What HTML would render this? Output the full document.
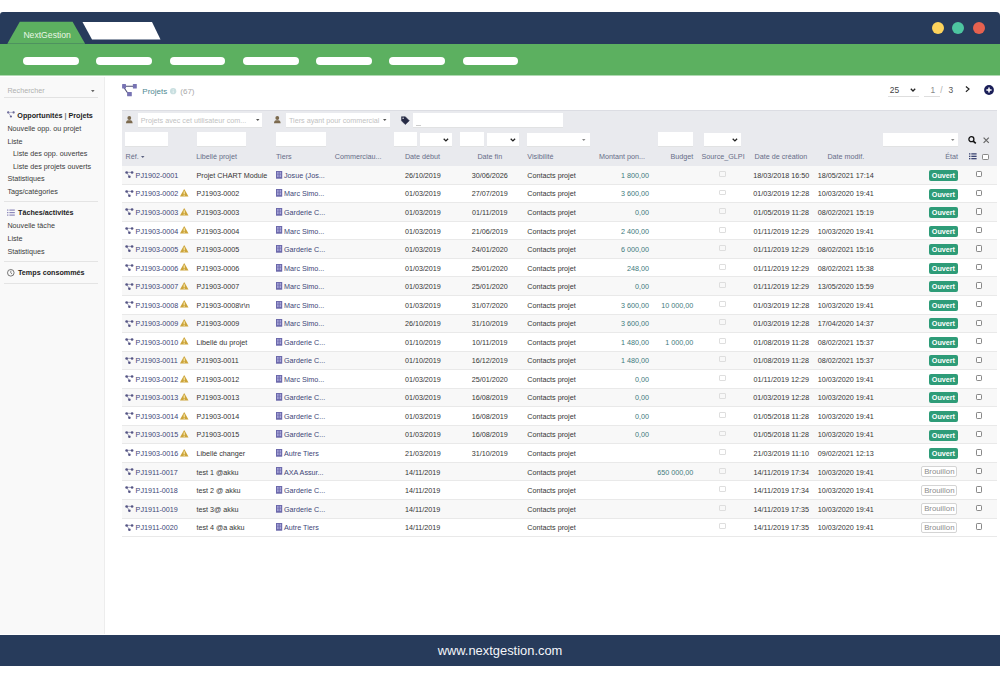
<!DOCTYPE html><html><head><meta charset="utf-8"><style>
html,body{margin:0;padding:0;width:1000px;height:679px;overflow:hidden;background:#fff;}
body{position:relative;font-family:"Liberation Sans",sans-serif;}
.t{position:absolute;white-space:nowrap;}
.r{position:absolute;}
svg{position:absolute;overflow:visible;}
</style></head><body>
<div class="r" style="left:0.00px;top:12.00px;width:1000.00px;height:31.70px;background:#273b5b;border-radius:3px 4px 0 0;"></div>
<svg style="left:0;top:0" width="1000" height="80"><polygon points="7.3,43.8 19.8,21.8 72.6,21.8 85.1,43.8" fill="#5cb060"/><polygon points="82.5,22 152,22 160.5,39.5 92,39.5" fill="#fff"/></svg>
<div class="t" style="left:23.40px;top:31.05px;font-size:8.65px;line-height:8.65px;color:#e9f7e4;">NextGestion</div>
<div class="r" style="left:0.00px;top:43.70px;width:1000.00px;height:31.30px;background:#5cb060;"></div>
<div class="r" style="left:0.00px;top:75.00px;width:1000.00px;height:1.00px;background:#b0d9b2;"></div>
<div class="r" style="left:23.00px;top:56.90px;width:55.70px;height:7.70px;background:#fff;border-radius:4px;"></div>
<div class="r" style="left:96.28px;top:56.90px;width:55.70px;height:7.70px;background:#fff;border-radius:4px;"></div>
<div class="r" style="left:169.56px;top:56.90px;width:55.70px;height:7.70px;background:#fff;border-radius:4px;"></div>
<div class="r" style="left:242.84px;top:56.90px;width:55.70px;height:7.70px;background:#fff;border-radius:4px;"></div>
<div class="r" style="left:316.12px;top:56.90px;width:55.70px;height:7.70px;background:#fff;border-radius:4px;"></div>
<div class="r" style="left:389.40px;top:56.90px;width:55.70px;height:7.70px;background:#fff;border-radius:4px;"></div>
<div class="r" style="left:462.68px;top:56.90px;width:55.70px;height:7.70px;background:#fff;border-radius:4px;"></div>
<div class="r" style="left:932.00px;top:21.60px;width:12.00px;height:12.00px;background:#fdd35c;border-radius:50%;"></div>
<div class="r" style="left:952.20px;top:21.60px;width:12.00px;height:12.00px;background:#4dc5a0;border-radius:50%;"></div>
<div class="r" style="left:973.00px;top:21.60px;width:12.00px;height:12.00px;background:#e6614f;border-radius:50%;"></div>
<div class="r" style="left:0.00px;top:76.60px;width:103.80px;height:557.60px;background:#f9f9f9;border-right:1px solid #ededed;"></div>
<div class="t" style="left:7.40px;top:86.98px;font-size:7.2px;line-height:7.2px;color:#b0b0b0;">Rechercher</div>
<svg style="left:90.5px;top:90px" width="4" height="3"><polygon points="0,0 3.6,0 1.8,2.2" fill="#666"/></svg>
<div class="r" style="left:4.30px;top:97.20px;width:93.70px;height:1.00px;background:#e2e2e2;"></div>
<div class="t" style="left:17.30px;top:111.58px;font-size:7.2px;line-height:7.2px;color:#222;font-weight:bold;">Opportunités <span style="color:#777">|</span> Projets</div>
<div class="t" style="left:7.40px;top:125.18px;font-size:7.2px;line-height:7.2px;color:#3a3a3a;">Nouvelle opp. ou projet</div>
<div class="t" style="left:7.40px;top:137.88px;font-size:7.2px;line-height:7.2px;color:#3a3a3a;">Liste</div>
<div class="t" style="left:13.10px;top:150.48px;font-size:7.2px;line-height:7.2px;color:#3a3a3a;">Liste des opp. ouvertes</div>
<div class="t" style="left:13.10px;top:162.68px;font-size:7.2px;line-height:7.2px;color:#3a3a3a;">Liste des projets ouverts</div>
<div class="t" style="left:7.40px;top:175.18px;font-size:7.2px;line-height:7.2px;color:#3a3a3a;">Statistiques</div>
<div class="t" style="left:7.40px;top:187.78px;font-size:7.2px;line-height:7.2px;color:#3a3a3a;">Tags/catégories</div>
<div class="t" style="left:18.00px;top:208.78px;font-size:7.2px;line-height:7.2px;color:#222;font-weight:bold;">Tâches/activités</div>
<div class="t" style="left:7.40px;top:222.48px;font-size:7.2px;line-height:7.2px;color:#3a3a3a;">Nouvelle tâche</div>
<div class="t" style="left:7.40px;top:234.98px;font-size:7.2px;line-height:7.2px;color:#3a3a3a;">Liste</div>
<div class="t" style="left:7.40px;top:247.78px;font-size:7.2px;line-height:7.2px;color:#3a3a3a;">Statistiques</div>
<div class="t" style="left:18.00px;top:268.58px;font-size:7.2px;line-height:7.2px;color:#222;font-weight:bold;">Temps consommés</div>
<div class="r" style="left:4.20px;top:200.80px;width:94.00px;height:1.00px;background:#e4e4e4;"></div>
<div class="r" style="left:4.20px;top:261.10px;width:94.00px;height:1.00px;background:#e4e4e4;"></div>
<div class="r" style="left:4.20px;top:282.90px;width:94.00px;height:1.00px;background:#e4e4e4;"></div>
<svg style="left:7.4px;top:110.9px" width="8" height="7"><g fill="#5e5c8e"><circle cx="1.2" cy="1.4" r="1.1"/><circle cx="6.6" cy="1.4" r="1.1"/><circle cx="3.9" cy="5.5" r="1.1"/></g><path d="M1.2 1.4 L6.6 1.4 M1.2 1.4 L3.9 5.5" stroke="#8a88b0" stroke-width="0.6"/></svg>
<svg style="left:7px;top:208.5px" width="8" height="7"><g fill="#8d89bb"><rect x="0" y="0.5" width="1.4" height="1.2"/><rect x="0" y="3" width="1.4" height="1.2"/><rect x="0" y="5.5" width="1.4" height="1.2"/><rect x="2.4" y="0.5" width="5.4" height="1.2"/><rect x="2.4" y="3" width="5.4" height="1.2"/><rect x="2.4" y="5.5" width="5.4" height="1.2"/></g></svg>
<svg style="left:7px;top:268.5px" width="8" height="8"><circle cx="3.8" cy="3.8" r="3.3" fill="none" stroke="#555" stroke-width="0.8"/><path d="M3.8 1.8 V3.9 L5.2 5.2" fill="none" stroke="#555" stroke-width="0.7"/></svg>
<svg style="left:118px;top:80px" width="24" height="20"><path d="M5 6.3 H15 M5 6.3 L9.7 13" stroke="#4f4f72" stroke-width="1.1"/><g fill="#7773b3"><rect x="4.1" y="4.1" width="3.9" height="4.4" rx="0.5"/><rect x="14.9" y="4.1" width="3.9" height="4.4" rx="0.5"/><rect x="9.1" y="11.9" width="4.7" height="4.4" rx="0.5"/></g></svg>
<div class="t" style="left:142.30px;top:87.50px;font-size:8.0px;line-height:8.0px;color:#4f8a92;">Projets</div>
<svg style="left:170.2px;top:87.6px" width="7" height="7"><circle cx="3.15" cy="3.15" r="3.15" fill="#c9dfe0"/><rect x="2.75" y="2.6" width="0.8" height="2.5" fill="#f2f8f8"/><rect x="2.75" y="1.3" width="0.8" height="0.8" fill="#f2f8f8"/></svg>
<div class="t" style="left:180.30px;top:87.50px;font-size:8.0px;line-height:8.0px;color:#a9a9a9;">(67)</div>
<div class="t" style="left:889.80px;top:85.86px;font-size:8.4px;line-height:8.4px;color:#444;">25</div>
<svg style="left:909.5px;top:87.5px" width="7" height="4"><path d="M0.8 0.8 L3 3 L5.2 0.8" fill="none" stroke="#222" stroke-width="1.3"/></svg>
<div class="r" style="left:888.20px;top:95.80px;width:30.40px;height:0.80px;background:#dedede;"></div>
<div class="t" style="left:930.60px;top:85.86px;font-size:8.4px;line-height:8.4px;color:#888;">1</div>
<div class="r" style="left:923.80px;top:95.80px;width:16.50px;height:0.80px;background:#dedede;"></div>
<div class="t" style="left:940.30px;top:85.86px;font-size:8.4px;line-height:8.4px;color:#aaa;">/</div>
<div class="t" style="left:948.40px;top:85.86px;font-size:8.4px;line-height:8.4px;color:#555;">3</div>
<svg style="left:965px;top:86px" width="6" height="7"><path d="M0.9 0.5 L4 3.1 L0.9 5.7" fill="none" stroke="#222" stroke-width="1.2"/></svg>
<svg style="left:983.6px;top:84.8px" width="11" height="11"><circle cx="5" cy="5" r="4.9" fill="#1a1e58"/><path d="M5 2.4 V7.6 M2.4 5 H7.6" stroke="#fff" stroke-width="1.5"/></svg>
<div class="r" style="left:121.50px;top:109.80px;width:875.00px;height:55.90px;background:#e9eaee;border-top:0.8px solid #dcdde3;box-sizing:border-box;"></div>
<div class="r" style="left:137.90px;top:113.00px;width:124.50px;height:14.00px;background:#fff;box-shadow:0 0.6px 0 #dcdcdc;"></div>
<div class="t" style="left:140.80px;top:116.98px;font-size:7.2px;line-height:7.2px;color:#c2c2c2;">Projets avec cet utilisateur com...</div>
<div class="r" style="left:285.60px;top:113.00px;width:104.00px;height:14.00px;background:#fff;box-shadow:0 0.6px 0 #dcdcdc;"></div>
<div class="t" style="left:289.00px;top:116.98px;font-size:7.2px;line-height:7.2px;color:#c2c2c2;">Tiers ayant pour commercial</div>
<div class="r" style="left:413.00px;top:113.00px;width:150.00px;height:14.40px;background:#fff;box-shadow:0 0.6px 0 #dcdcdc;"></div>
<div class="r" style="left:416.00px;top:124.60px;width:5.00px;height:0.70px;background:#ccc;"></div>
<svg style="left:255.7px;top:119.3px" width="4" height="3"><polygon points="0,0 3.5,0 1.75,2" fill="#555"/></svg>
<svg style="left:383px;top:119.3px" width="4" height="3"><polygon points="0,0 3.5,0 1.75,2" fill="#555"/></svg>
<svg style="left:125.9px;top:115.8px" width="7" height="8"><g fill="#7c6a4e"><circle cx="3.3" cy="2" r="1.9"/><path d="M0 7.2 C0 4.6 1.2 4.2 3.3 4.2 C5.4 4.2 6.6 4.6 6.6 7.2 Z"/></g></svg>
<svg style="left:273.6px;top:115.8px" width="7" height="8"><g fill="#7c6a4e"><circle cx="3.3" cy="2" r="1.9"/><path d="M0 7.2 C0 4.6 1.2 4.2 3.3 4.2 C5.4 4.2 6.6 4.6 6.6 7.2 Z"/></g></svg>
<svg style="left:400.6px;top:115.6px" width="9" height="9"><path d="M0.5 0.7 H4.3 L8.3 4.7 L4.3 8.6 L0.5 4.8 Z" fill="#262a44" stroke="#262a44" stroke-width="0.5" stroke-linejoin="round"/><circle cx="2.1" cy="2.3" r="0.75" fill="#e9eaee"/></svg>
<div class="r" style="left:124.70px;top:132.30px;width:43.30px;height:13.90px;background:#fff;box-shadow:0 0.6px 0 #dcdcdc;"></div>
<div class="r" style="left:196.80px;top:132.30px;width:49.60px;height:13.90px;background:#fff;box-shadow:0 0.6px 0 #dcdcdc;"></div>
<div class="r" style="left:276.20px;top:132.30px;width:50.10px;height:13.90px;background:#fff;box-shadow:0 0.6px 0 #dcdcdc;"></div>
<div class="r" style="left:393.60px;top:132.30px;width:23.80px;height:13.90px;background:#fff;box-shadow:0 0.6px 0 #dcdcdc;"></div>
<div class="r" style="left:460.30px;top:132.30px;width:24.20px;height:13.90px;background:#fff;box-shadow:0 0.6px 0 #dcdcdc;"></div>
<div class="r" style="left:658.00px;top:132.30px;width:34.80px;height:13.90px;background:#fff;box-shadow:0 0.6px 0 #dcdcdc;"></div>
<div class="r" style="left:419.60px;top:132.80px;width:32.40px;height:13.10px;background:#fff;box-shadow:0 0.6px 0 #dcdcdc;"></div>
<svg style="left:442.7px;top:138px" width="7" height="4"><path d="M0.7 0.7 L2.9 2.9 L5.1 0.7" fill="none" stroke="#222" stroke-width="1.3"/></svg>
<div class="r" style="left:487.10px;top:132.80px;width:31.50px;height:13.10px;background:#fff;box-shadow:0 0.6px 0 #dcdcdc;"></div>
<svg style="left:509.8px;top:138px" width="7" height="4"><path d="M0.7 0.7 L2.9 2.9 L5.1 0.7" fill="none" stroke="#222" stroke-width="1.3"/></svg>
<div class="r" style="left:704.20px;top:132.80px;width:37.00px;height:13.10px;background:#fff;box-shadow:0 0.6px 0 #dcdcdc;"></div>
<svg style="left:732.4px;top:138px" width="7" height="4"><path d="M0.7 0.7 L2.9 2.9 L5.1 0.7" fill="none" stroke="#222" stroke-width="1.3"/></svg>
<div class="r" style="left:527.00px;top:132.60px;width:62.50px;height:13.60px;background:#fff;box-shadow:0 0.6px 0 #dcdcdc;"></div>
<svg style="left:582.3px;top:139px" width="4" height="3"><polygon points="0,0 3.5,0 1.75,2" fill="#888"/></svg>
<div class="r" style="left:882.60px;top:132.60px;width:75.20px;height:13.60px;background:#fff;box-shadow:0 0.6px 0 #dcdcdc;"></div>
<svg style="left:951px;top:139px" width="4" height="3"><polygon points="0,0 3.5,0 1.75,2" fill="#888"/></svg>
<svg style="left:968px;top:136.4px" width="10" height="8"><circle cx="3.4" cy="3.2" r="2.5" fill="none" stroke="#111" stroke-width="1.3"/><path d="M5.2 5.1 L7.8 7.4" stroke="#111" stroke-width="1.6"/></svg>
<svg style="left:983px;top:137px" width="7" height="7"><path d="M0.6 0.6 L5.8 5.8 M5.8 0.6 L0.6 5.8" stroke="#666" stroke-width="1.2"/></svg>
<div class="t" style="left:125.60px;top:152.68px;font-size:7.2px;line-height:7.2px;color:#676d88;">Réf.</div>
<div class="t" style="left:196.20px;top:152.68px;font-size:7.2px;line-height:7.2px;color:#676d88;">Libellé projet</div>
<div class="t" style="left:276.00px;top:152.68px;font-size:7.2px;line-height:7.2px;color:#676d88;">Tiers</div>
<div class="t" style="left:334.80px;top:152.68px;font-size:7.2px;line-height:7.2px;color:#676d88;">Commerciau...</div>
<div class="t" style="left:404.90px;top:152.68px;font-size:7.2px;line-height:7.2px;color:#676d88;">Date début</div>
<div class="t" style="left:289.80px;width:400px;text-align:center;top:152.68px;font-size:7.2px;line-height:7.2px;color:#676d88;">Date fin</div>
<div class="t" style="left:527.30px;top:152.68px;font-size:7.2px;line-height:7.2px;color:#676d88;">Visibilité</div>
<div class="t" style="right:355.00px;top:152.68px;font-size:7.2px;line-height:7.2px;color:#676d88;">Montant pon...</div>
<div class="t" style="right:306.80px;top:152.68px;font-size:7.2px;line-height:7.2px;color:#676d88;">Budget</div>
<div class="t" style="left:701.50px;top:152.68px;font-size:7.2px;line-height:7.2px;color:#676d88;">Source_GLPI</div>
<div class="t" style="left:580.90px;width:400px;text-align:center;top:152.68px;font-size:7.2px;line-height:7.2px;color:#676d88;">Date de création</div>
<div class="t" style="left:645.80px;width:400px;text-align:center;top:152.68px;font-size:7.2px;line-height:7.2px;color:#676d88;">Date modif.</div>
<div class="t" style="right:41.90px;top:152.68px;font-size:7.2px;line-height:7.2px;color:#676d88;">État</div>
<svg style="left:141px;top:155.5px" width="4" height="3"><polygon points="0,0 3.5,0 1.75,2" fill="#5a6180"/></svg>
<svg style="left:968.6px;top:153px" width="8" height="7"><g fill="#2b3566"><rect x="0" y="0.3" width="1.4" height="1.2"/><rect x="0" y="2.7" width="1.4" height="1.2"/><rect x="0" y="5.1" width="1.4" height="1.2"/><rect x="2.3" y="0.3" width="5.3" height="1.2"/><rect x="2.3" y="2.7" width="5.3" height="1.2"/><rect x="2.3" y="5.1" width="5.3" height="1.2"/></g></svg>
<div class="r" style="left:982.10px;top:153.60px;width:6.90px;height:6.20px;background:#fff;border:0.8px solid #888;border-radius:1.2px;box-sizing:border-box;"></div>
<div class="r" style="left:121.50px;top:165.70px;width:875.00px;height:18.54px;background:#f8f8f8;"></div>
<div class="r" style="left:121.50px;top:183.79px;width:875.00px;height:1.00px;background:#e9e9e9;z-index:1;"></div>
<svg style="left:125px;top:171.30px" width="9" height="7"><g fill="#555585"><circle cx="1.6" cy="1.5" r="1.3"/><circle cx="7.1" cy="1.5" r="1.3"/><circle cx="4.4" cy="5.8" r="1.3"/></g><path d="M1.6 1.3 L7.1 1.4 M1.6 1.3 L4.4 5.6" stroke="#555585" stroke-width="0.55"/></svg>
<div class="t" style="left:135.60px;top:171.88px;font-size:7.2px;line-height:7.2px;color:#3d4677;">PJ1902-0001</div>
<div class="t" style="left:196.50px;top:171.88px;font-size:7.2px;line-height:7.2px;color:#353535;">Projet CHART Module</div>
<svg style="left:276px;top:170.80px" width="7" height="8"><rect x="0" y="0" width="6.2" height="7.7" fill="#6a67aa"/><g fill="#a8a6da"><rect x="1.1" y="0.9" width="1.5" height="5.2"/><rect x="3.6" y="0.9" width="1.5" height="5.2"/></g><rect x="1.1" y="2.9" width="4" height="0.5" fill="#6a67aa"/></svg>
<div class="t" style="left:284.00px;top:171.88px;font-size:7.2px;line-height:7.2px;color:#3d4677;">Josue (Jos...</div>
<div class="t" style="left:404.90px;top:171.88px;font-size:7.2px;line-height:7.2px;color:#353535;">26/10/2019</div>
<div class="t" style="left:289.70px;width:400px;text-align:center;top:171.88px;font-size:7.2px;line-height:7.2px;color:#353535;">30/06/2026</div>
<div class="t" style="left:527.30px;top:171.88px;font-size:7.2px;line-height:7.2px;color:#353535;">Contacts projet</div>
<div class="t" style="right:351.10px;top:171.88px;font-size:7.2px;line-height:7.2px;color:#417a7d;">1 800,00</div>
<div class="r" style="left:719.10px;top:171.00px;width:6.70px;height:5.90px;background:transparent;border:0.8px solid #dedede;border-radius:1px;box-sizing:border-box;"></div>
<div class="t" style="left:581.30px;width:400px;text-align:center;top:171.88px;font-size:7.2px;line-height:7.2px;color:#353535;">18/03/2018 16:50</div>
<div class="t" style="left:645.75px;width:400px;text-align:center;top:171.88px;font-size:7.2px;line-height:7.2px;color:#353535;">18/05/2021 17:14</div>
<div class="r" style="left:929.00px;top:170.00px;width:28.80px;height:11.00px;background:#2e9c78;border-radius:2px;"></div>
<div class="t" style="left:743.40px;width:400px;text-align:center;top:171.98px;font-size:7.2px;line-height:7.2px;color:#fff;font-weight:bold;">Ouvert</div>
<div class="r" style="left:975.50px;top:171.20px;width:6.50px;height:6.30px;background:#fff;border:0.8px solid #888;border-radius:1.2px;box-sizing:border-box;"></div>
<div class="r" style="left:121.50px;top:184.24px;width:875.00px;height:18.54px;background:#fff;"></div>
<div class="r" style="left:121.50px;top:202.33px;width:875.00px;height:1.00px;background:#e9e9e9;z-index:1;"></div>
<svg style="left:125px;top:189.84px" width="9" height="7"><g fill="#555585"><circle cx="1.6" cy="1.5" r="1.3"/><circle cx="7.1" cy="1.5" r="1.3"/><circle cx="4.4" cy="5.8" r="1.3"/></g><path d="M1.6 1.3 L7.1 1.4 M1.6 1.3 L4.4 5.6" stroke="#555585" stroke-width="0.55"/></svg>
<div class="t" style="left:135.60px;top:190.42px;font-size:7.2px;line-height:7.2px;color:#3d4677;">PJ1903-0002</div>
<svg style="left:179.6px;top:189.14px" width="9" height="8"><polygon points="4.2,0.1 8.5,7.5 0,7.5" fill="#cca43a"/><rect x="3.6" y="2.3" width="1.2" height="3" fill="#f8e8ab"/><rect x="3.6" y="5.9" width="1.2" height="0.9" fill="#f8e8ab"/></svg>
<div class="t" style="left:196.50px;top:190.42px;font-size:7.2px;line-height:7.2px;color:#353535;">PJ1903-0002</div>
<svg style="left:276px;top:189.34px" width="7" height="8"><rect x="0" y="0" width="6.2" height="7.7" fill="#6a67aa"/><g fill="#a8a6da"><rect x="1.1" y="0.9" width="1.5" height="5.2"/><rect x="3.6" y="0.9" width="1.5" height="5.2"/></g><rect x="1.1" y="2.9" width="4" height="0.5" fill="#6a67aa"/></svg>
<div class="t" style="left:284.00px;top:190.42px;font-size:7.2px;line-height:7.2px;color:#3d4677;">Marc Simo...</div>
<div class="t" style="left:404.90px;top:190.42px;font-size:7.2px;line-height:7.2px;color:#353535;">01/03/2019</div>
<div class="t" style="left:289.70px;width:400px;text-align:center;top:190.42px;font-size:7.2px;line-height:7.2px;color:#353535;">27/07/2019</div>
<div class="t" style="left:527.30px;top:190.42px;font-size:7.2px;line-height:7.2px;color:#353535;">Contacts projet</div>
<div class="t" style="right:351.10px;top:190.42px;font-size:7.2px;line-height:7.2px;color:#417a7d;">3 600,00</div>
<div class="r" style="left:719.10px;top:189.54px;width:6.70px;height:5.90px;background:transparent;border:0.8px solid #dedede;border-radius:1px;box-sizing:border-box;"></div>
<div class="t" style="left:581.30px;width:400px;text-align:center;top:190.42px;font-size:7.2px;line-height:7.2px;color:#353535;">01/03/2019 12:28</div>
<div class="t" style="left:645.75px;width:400px;text-align:center;top:190.42px;font-size:7.2px;line-height:7.2px;color:#353535;">10/03/2020 19:41</div>
<div class="r" style="left:929.00px;top:188.54px;width:28.80px;height:11.00px;background:#2e9c78;border-radius:2px;"></div>
<div class="t" style="left:743.40px;width:400px;text-align:center;top:190.52px;font-size:7.2px;line-height:7.2px;color:#fff;font-weight:bold;">Ouvert</div>
<div class="r" style="left:975.50px;top:189.74px;width:6.50px;height:6.30px;background:#fff;border:0.8px solid #888;border-radius:1.2px;box-sizing:border-box;"></div>
<div class="r" style="left:121.50px;top:202.78px;width:875.00px;height:18.54px;background:#f8f8f8;"></div>
<div class="r" style="left:121.50px;top:220.87px;width:875.00px;height:1.00px;background:#e9e9e9;z-index:1;"></div>
<svg style="left:125px;top:208.38px" width="9" height="7"><g fill="#555585"><circle cx="1.6" cy="1.5" r="1.3"/><circle cx="7.1" cy="1.5" r="1.3"/><circle cx="4.4" cy="5.8" r="1.3"/></g><path d="M1.6 1.3 L7.1 1.4 M1.6 1.3 L4.4 5.6" stroke="#555585" stroke-width="0.55"/></svg>
<div class="t" style="left:135.60px;top:208.96px;font-size:7.2px;line-height:7.2px;color:#3d4677;">PJ1903-0003</div>
<svg style="left:179.6px;top:207.68px" width="9" height="8"><polygon points="4.2,0.1 8.5,7.5 0,7.5" fill="#cca43a"/><rect x="3.6" y="2.3" width="1.2" height="3" fill="#f8e8ab"/><rect x="3.6" y="5.9" width="1.2" height="0.9" fill="#f8e8ab"/></svg>
<div class="t" style="left:196.50px;top:208.96px;font-size:7.2px;line-height:7.2px;color:#353535;">PJ1903-0003</div>
<svg style="left:276px;top:207.88px" width="7" height="8"><rect x="0" y="0" width="6.2" height="7.7" fill="#6a67aa"/><g fill="#a8a6da"><rect x="1.1" y="0.9" width="1.5" height="5.2"/><rect x="3.6" y="0.9" width="1.5" height="5.2"/></g><rect x="1.1" y="2.9" width="4" height="0.5" fill="#6a67aa"/></svg>
<div class="t" style="left:284.00px;top:208.96px;font-size:7.2px;line-height:7.2px;color:#3d4677;">Garderie C...</div>
<div class="t" style="left:404.90px;top:208.96px;font-size:7.2px;line-height:7.2px;color:#353535;">01/03/2019</div>
<div class="t" style="left:289.70px;width:400px;text-align:center;top:208.96px;font-size:7.2px;line-height:7.2px;color:#353535;">01/11/2019</div>
<div class="t" style="left:527.30px;top:208.96px;font-size:7.2px;line-height:7.2px;color:#353535;">Contacts projet</div>
<div class="t" style="right:351.10px;top:208.96px;font-size:7.2px;line-height:7.2px;color:#417a7d;">0,00</div>
<div class="r" style="left:719.10px;top:208.08px;width:6.70px;height:5.90px;background:transparent;border:0.8px solid #dedede;border-radius:1px;box-sizing:border-box;"></div>
<div class="t" style="left:581.30px;width:400px;text-align:center;top:208.96px;font-size:7.2px;line-height:7.2px;color:#353535;">01/05/2019 11:28</div>
<div class="t" style="left:645.75px;width:400px;text-align:center;top:208.96px;font-size:7.2px;line-height:7.2px;color:#353535;">08/02/2021 15:19</div>
<div class="r" style="left:929.00px;top:207.08px;width:28.80px;height:11.00px;background:#2e9c78;border-radius:2px;"></div>
<div class="t" style="left:743.40px;width:400px;text-align:center;top:209.06px;font-size:7.2px;line-height:7.2px;color:#fff;font-weight:bold;">Ouvert</div>
<div class="r" style="left:975.50px;top:208.28px;width:6.50px;height:6.30px;background:#fff;border:0.8px solid #888;border-radius:1.2px;box-sizing:border-box;"></div>
<div class="r" style="left:121.50px;top:221.32px;width:875.00px;height:18.54px;background:#fff;"></div>
<div class="r" style="left:121.50px;top:239.41px;width:875.00px;height:1.00px;background:#e9e9e9;z-index:1;"></div>
<svg style="left:125px;top:226.92px" width="9" height="7"><g fill="#555585"><circle cx="1.6" cy="1.5" r="1.3"/><circle cx="7.1" cy="1.5" r="1.3"/><circle cx="4.4" cy="5.8" r="1.3"/></g><path d="M1.6 1.3 L7.1 1.4 M1.6 1.3 L4.4 5.6" stroke="#555585" stroke-width="0.55"/></svg>
<div class="t" style="left:135.60px;top:227.50px;font-size:7.2px;line-height:7.2px;color:#3d4677;">PJ1903-0004</div>
<svg style="left:179.6px;top:226.22px" width="9" height="8"><polygon points="4.2,0.1 8.5,7.5 0,7.5" fill="#cca43a"/><rect x="3.6" y="2.3" width="1.2" height="3" fill="#f8e8ab"/><rect x="3.6" y="5.9" width="1.2" height="0.9" fill="#f8e8ab"/></svg>
<div class="t" style="left:196.50px;top:227.50px;font-size:7.2px;line-height:7.2px;color:#353535;">PJ1903-0004</div>
<svg style="left:276px;top:226.42px" width="7" height="8"><rect x="0" y="0" width="6.2" height="7.7" fill="#6a67aa"/><g fill="#a8a6da"><rect x="1.1" y="0.9" width="1.5" height="5.2"/><rect x="3.6" y="0.9" width="1.5" height="5.2"/></g><rect x="1.1" y="2.9" width="4" height="0.5" fill="#6a67aa"/></svg>
<div class="t" style="left:284.00px;top:227.50px;font-size:7.2px;line-height:7.2px;color:#3d4677;">Marc Simo...</div>
<div class="t" style="left:404.90px;top:227.50px;font-size:7.2px;line-height:7.2px;color:#353535;">01/03/2019</div>
<div class="t" style="left:289.70px;width:400px;text-align:center;top:227.50px;font-size:7.2px;line-height:7.2px;color:#353535;">21/06/2019</div>
<div class="t" style="left:527.30px;top:227.50px;font-size:7.2px;line-height:7.2px;color:#353535;">Contacts projet</div>
<div class="t" style="right:351.10px;top:227.50px;font-size:7.2px;line-height:7.2px;color:#417a7d;">2 400,00</div>
<div class="r" style="left:719.10px;top:226.62px;width:6.70px;height:5.90px;background:transparent;border:0.8px solid #dedede;border-radius:1px;box-sizing:border-box;"></div>
<div class="t" style="left:581.30px;width:400px;text-align:center;top:227.50px;font-size:7.2px;line-height:7.2px;color:#353535;">01/11/2019 12:29</div>
<div class="t" style="left:645.75px;width:400px;text-align:center;top:227.50px;font-size:7.2px;line-height:7.2px;color:#353535;">10/03/2020 19:41</div>
<div class="r" style="left:929.00px;top:225.62px;width:28.80px;height:11.00px;background:#2e9c78;border-radius:2px;"></div>
<div class="t" style="left:743.40px;width:400px;text-align:center;top:227.60px;font-size:7.2px;line-height:7.2px;color:#fff;font-weight:bold;">Ouvert</div>
<div class="r" style="left:975.50px;top:226.82px;width:6.50px;height:6.30px;background:#fff;border:0.8px solid #888;border-radius:1.2px;box-sizing:border-box;"></div>
<div class="r" style="left:121.50px;top:239.86px;width:875.00px;height:18.54px;background:#f8f8f8;"></div>
<div class="r" style="left:121.50px;top:257.95px;width:875.00px;height:1.00px;background:#e9e9e9;z-index:1;"></div>
<svg style="left:125px;top:245.46px" width="9" height="7"><g fill="#555585"><circle cx="1.6" cy="1.5" r="1.3"/><circle cx="7.1" cy="1.5" r="1.3"/><circle cx="4.4" cy="5.8" r="1.3"/></g><path d="M1.6 1.3 L7.1 1.4 M1.6 1.3 L4.4 5.6" stroke="#555585" stroke-width="0.55"/></svg>
<div class="t" style="left:135.60px;top:246.04px;font-size:7.2px;line-height:7.2px;color:#3d4677;">PJ1903-0005</div>
<svg style="left:179.6px;top:244.76px" width="9" height="8"><polygon points="4.2,0.1 8.5,7.5 0,7.5" fill="#cca43a"/><rect x="3.6" y="2.3" width="1.2" height="3" fill="#f8e8ab"/><rect x="3.6" y="5.9" width="1.2" height="0.9" fill="#f8e8ab"/></svg>
<div class="t" style="left:196.50px;top:246.04px;font-size:7.2px;line-height:7.2px;color:#353535;">PJ1903-0005</div>
<svg style="left:276px;top:244.96px" width="7" height="8"><rect x="0" y="0" width="6.2" height="7.7" fill="#6a67aa"/><g fill="#a8a6da"><rect x="1.1" y="0.9" width="1.5" height="5.2"/><rect x="3.6" y="0.9" width="1.5" height="5.2"/></g><rect x="1.1" y="2.9" width="4" height="0.5" fill="#6a67aa"/></svg>
<div class="t" style="left:284.00px;top:246.04px;font-size:7.2px;line-height:7.2px;color:#3d4677;">Garderie C...</div>
<div class="t" style="left:404.90px;top:246.04px;font-size:7.2px;line-height:7.2px;color:#353535;">01/03/2019</div>
<div class="t" style="left:289.70px;width:400px;text-align:center;top:246.04px;font-size:7.2px;line-height:7.2px;color:#353535;">24/01/2020</div>
<div class="t" style="left:527.30px;top:246.04px;font-size:7.2px;line-height:7.2px;color:#353535;">Contacts projet</div>
<div class="t" style="right:351.10px;top:246.04px;font-size:7.2px;line-height:7.2px;color:#417a7d;">6 000,00</div>
<div class="r" style="left:719.10px;top:245.16px;width:6.70px;height:5.90px;background:transparent;border:0.8px solid #dedede;border-radius:1px;box-sizing:border-box;"></div>
<div class="t" style="left:581.30px;width:400px;text-align:center;top:246.04px;font-size:7.2px;line-height:7.2px;color:#353535;">01/11/2019 12:29</div>
<div class="t" style="left:645.75px;width:400px;text-align:center;top:246.04px;font-size:7.2px;line-height:7.2px;color:#353535;">08/02/2021 15:16</div>
<div class="r" style="left:929.00px;top:244.16px;width:28.80px;height:11.00px;background:#2e9c78;border-radius:2px;"></div>
<div class="t" style="left:743.40px;width:400px;text-align:center;top:246.14px;font-size:7.2px;line-height:7.2px;color:#fff;font-weight:bold;">Ouvert</div>
<div class="r" style="left:975.50px;top:245.36px;width:6.50px;height:6.30px;background:#fff;border:0.8px solid #888;border-radius:1.2px;box-sizing:border-box;"></div>
<div class="r" style="left:121.50px;top:258.40px;width:875.00px;height:18.54px;background:#fff;"></div>
<div class="r" style="left:121.50px;top:276.49px;width:875.00px;height:1.00px;background:#e9e9e9;z-index:1;"></div>
<svg style="left:125px;top:264.00px" width="9" height="7"><g fill="#555585"><circle cx="1.6" cy="1.5" r="1.3"/><circle cx="7.1" cy="1.5" r="1.3"/><circle cx="4.4" cy="5.8" r="1.3"/></g><path d="M1.6 1.3 L7.1 1.4 M1.6 1.3 L4.4 5.6" stroke="#555585" stroke-width="0.55"/></svg>
<div class="t" style="left:135.60px;top:264.58px;font-size:7.2px;line-height:7.2px;color:#3d4677;">PJ1903-0006</div>
<svg style="left:179.6px;top:263.30px" width="9" height="8"><polygon points="4.2,0.1 8.5,7.5 0,7.5" fill="#cca43a"/><rect x="3.6" y="2.3" width="1.2" height="3" fill="#f8e8ab"/><rect x="3.6" y="5.9" width="1.2" height="0.9" fill="#f8e8ab"/></svg>
<div class="t" style="left:196.50px;top:264.58px;font-size:7.2px;line-height:7.2px;color:#353535;">PJ1903-0006</div>
<svg style="left:276px;top:263.50px" width="7" height="8"><rect x="0" y="0" width="6.2" height="7.7" fill="#6a67aa"/><g fill="#a8a6da"><rect x="1.1" y="0.9" width="1.5" height="5.2"/><rect x="3.6" y="0.9" width="1.5" height="5.2"/></g><rect x="1.1" y="2.9" width="4" height="0.5" fill="#6a67aa"/></svg>
<div class="t" style="left:284.00px;top:264.58px;font-size:7.2px;line-height:7.2px;color:#3d4677;">Marc Simo...</div>
<div class="t" style="left:404.90px;top:264.58px;font-size:7.2px;line-height:7.2px;color:#353535;">01/03/2019</div>
<div class="t" style="left:289.70px;width:400px;text-align:center;top:264.58px;font-size:7.2px;line-height:7.2px;color:#353535;">25/01/2020</div>
<div class="t" style="left:527.30px;top:264.58px;font-size:7.2px;line-height:7.2px;color:#353535;">Contacts projet</div>
<div class="t" style="right:351.10px;top:264.58px;font-size:7.2px;line-height:7.2px;color:#417a7d;">248,00</div>
<div class="r" style="left:719.10px;top:263.70px;width:6.70px;height:5.90px;background:transparent;border:0.8px solid #dedede;border-radius:1px;box-sizing:border-box;"></div>
<div class="t" style="left:581.30px;width:400px;text-align:center;top:264.58px;font-size:7.2px;line-height:7.2px;color:#353535;">01/11/2019 12:29</div>
<div class="t" style="left:645.75px;width:400px;text-align:center;top:264.58px;font-size:7.2px;line-height:7.2px;color:#353535;">08/02/2021 15:38</div>
<div class="r" style="left:929.00px;top:262.70px;width:28.80px;height:11.00px;background:#2e9c78;border-radius:2px;"></div>
<div class="t" style="left:743.40px;width:400px;text-align:center;top:264.68px;font-size:7.2px;line-height:7.2px;color:#fff;font-weight:bold;">Ouvert</div>
<div class="r" style="left:975.50px;top:263.90px;width:6.50px;height:6.30px;background:#fff;border:0.8px solid #888;border-radius:1.2px;box-sizing:border-box;"></div>
<div class="r" style="left:121.50px;top:276.94px;width:875.00px;height:18.54px;background:#f8f8f8;"></div>
<div class="r" style="left:121.50px;top:295.03px;width:875.00px;height:1.00px;background:#e9e9e9;z-index:1;"></div>
<svg style="left:125px;top:282.54px" width="9" height="7"><g fill="#555585"><circle cx="1.6" cy="1.5" r="1.3"/><circle cx="7.1" cy="1.5" r="1.3"/><circle cx="4.4" cy="5.8" r="1.3"/></g><path d="M1.6 1.3 L7.1 1.4 M1.6 1.3 L4.4 5.6" stroke="#555585" stroke-width="0.55"/></svg>
<div class="t" style="left:135.60px;top:283.12px;font-size:7.2px;line-height:7.2px;color:#3d4677;">PJ1903-0007</div>
<svg style="left:179.6px;top:281.84px" width="9" height="8"><polygon points="4.2,0.1 8.5,7.5 0,7.5" fill="#cca43a"/><rect x="3.6" y="2.3" width="1.2" height="3" fill="#f8e8ab"/><rect x="3.6" y="5.9" width="1.2" height="0.9" fill="#f8e8ab"/></svg>
<div class="t" style="left:196.50px;top:283.12px;font-size:7.2px;line-height:7.2px;color:#353535;">PJ1903-0007</div>
<svg style="left:276px;top:282.04px" width="7" height="8"><rect x="0" y="0" width="6.2" height="7.7" fill="#6a67aa"/><g fill="#a8a6da"><rect x="1.1" y="0.9" width="1.5" height="5.2"/><rect x="3.6" y="0.9" width="1.5" height="5.2"/></g><rect x="1.1" y="2.9" width="4" height="0.5" fill="#6a67aa"/></svg>
<div class="t" style="left:284.00px;top:283.12px;font-size:7.2px;line-height:7.2px;color:#3d4677;">Marc Simo...</div>
<div class="t" style="left:404.90px;top:283.12px;font-size:7.2px;line-height:7.2px;color:#353535;">01/03/2019</div>
<div class="t" style="left:289.70px;width:400px;text-align:center;top:283.12px;font-size:7.2px;line-height:7.2px;color:#353535;">25/01/2020</div>
<div class="t" style="left:527.30px;top:283.12px;font-size:7.2px;line-height:7.2px;color:#353535;">Contacts projet</div>
<div class="t" style="right:351.10px;top:283.12px;font-size:7.2px;line-height:7.2px;color:#417a7d;">0,00</div>
<div class="r" style="left:719.10px;top:282.24px;width:6.70px;height:5.90px;background:transparent;border:0.8px solid #dedede;border-radius:1px;box-sizing:border-box;"></div>
<div class="t" style="left:581.30px;width:400px;text-align:center;top:283.12px;font-size:7.2px;line-height:7.2px;color:#353535;">01/11/2019 12:29</div>
<div class="t" style="left:645.75px;width:400px;text-align:center;top:283.12px;font-size:7.2px;line-height:7.2px;color:#353535;">13/05/2020 15:59</div>
<div class="r" style="left:929.00px;top:281.24px;width:28.80px;height:11.00px;background:#2e9c78;border-radius:2px;"></div>
<div class="t" style="left:743.40px;width:400px;text-align:center;top:283.22px;font-size:7.2px;line-height:7.2px;color:#fff;font-weight:bold;">Ouvert</div>
<div class="r" style="left:975.50px;top:282.44px;width:6.50px;height:6.30px;background:#fff;border:0.8px solid #888;border-radius:1.2px;box-sizing:border-box;"></div>
<div class="r" style="left:121.50px;top:295.48px;width:875.00px;height:18.54px;background:#fff;"></div>
<div class="r" style="left:121.50px;top:313.57px;width:875.00px;height:1.00px;background:#e9e9e9;z-index:1;"></div>
<svg style="left:125px;top:301.08px" width="9" height="7"><g fill="#555585"><circle cx="1.6" cy="1.5" r="1.3"/><circle cx="7.1" cy="1.5" r="1.3"/><circle cx="4.4" cy="5.8" r="1.3"/></g><path d="M1.6 1.3 L7.1 1.4 M1.6 1.3 L4.4 5.6" stroke="#555585" stroke-width="0.55"/></svg>
<div class="t" style="left:135.60px;top:301.66px;font-size:7.2px;line-height:7.2px;color:#3d4677;">PJ1903-0008</div>
<svg style="left:179.6px;top:300.38px" width="9" height="8"><polygon points="4.2,0.1 8.5,7.5 0,7.5" fill="#cca43a"/><rect x="3.6" y="2.3" width="1.2" height="3" fill="#f8e8ab"/><rect x="3.6" y="5.9" width="1.2" height="0.9" fill="#f8e8ab"/></svg>
<div class="t" style="left:196.50px;top:301.66px;font-size:7.2px;line-height:7.2px;color:#353535;">PJ1903-0008\r\n</div>
<svg style="left:276px;top:300.58px" width="7" height="8"><rect x="0" y="0" width="6.2" height="7.7" fill="#6a67aa"/><g fill="#a8a6da"><rect x="1.1" y="0.9" width="1.5" height="5.2"/><rect x="3.6" y="0.9" width="1.5" height="5.2"/></g><rect x="1.1" y="2.9" width="4" height="0.5" fill="#6a67aa"/></svg>
<div class="t" style="left:284.00px;top:301.66px;font-size:7.2px;line-height:7.2px;color:#3d4677;">Marc Simo...</div>
<div class="t" style="left:404.90px;top:301.66px;font-size:7.2px;line-height:7.2px;color:#353535;">01/03/2019</div>
<div class="t" style="left:289.70px;width:400px;text-align:center;top:301.66px;font-size:7.2px;line-height:7.2px;color:#353535;">31/07/2020</div>
<div class="t" style="left:527.30px;top:301.66px;font-size:7.2px;line-height:7.2px;color:#353535;">Contacts projet</div>
<div class="t" style="right:351.10px;top:301.66px;font-size:7.2px;line-height:7.2px;color:#417a7d;">3 600,00</div>
<div class="t" style="right:306.80px;top:301.66px;font-size:7.2px;line-height:7.2px;color:#417a7d;">10 000,00</div>
<div class="r" style="left:719.10px;top:300.78px;width:6.70px;height:5.90px;background:transparent;border:0.8px solid #dedede;border-radius:1px;box-sizing:border-box;"></div>
<div class="t" style="left:581.30px;width:400px;text-align:center;top:301.66px;font-size:7.2px;line-height:7.2px;color:#353535;">01/03/2019 12:28</div>
<div class="t" style="left:645.75px;width:400px;text-align:center;top:301.66px;font-size:7.2px;line-height:7.2px;color:#353535;">10/03/2020 19:41</div>
<div class="r" style="left:929.00px;top:299.78px;width:28.80px;height:11.00px;background:#2e9c78;border-radius:2px;"></div>
<div class="t" style="left:743.40px;width:400px;text-align:center;top:301.76px;font-size:7.2px;line-height:7.2px;color:#fff;font-weight:bold;">Ouvert</div>
<div class="r" style="left:975.50px;top:300.98px;width:6.50px;height:6.30px;background:#fff;border:0.8px solid #888;border-radius:1.2px;box-sizing:border-box;"></div>
<div class="r" style="left:121.50px;top:314.02px;width:875.00px;height:18.54px;background:#f8f8f8;"></div>
<div class="r" style="left:121.50px;top:332.11px;width:875.00px;height:1.00px;background:#e9e9e9;z-index:1;"></div>
<svg style="left:125px;top:319.62px" width="9" height="7"><g fill="#555585"><circle cx="1.6" cy="1.5" r="1.3"/><circle cx="7.1" cy="1.5" r="1.3"/><circle cx="4.4" cy="5.8" r="1.3"/></g><path d="M1.6 1.3 L7.1 1.4 M1.6 1.3 L4.4 5.6" stroke="#555585" stroke-width="0.55"/></svg>
<div class="t" style="left:135.60px;top:320.20px;font-size:7.2px;line-height:7.2px;color:#3d4677;">PJ1903-0009</div>
<svg style="left:179.6px;top:318.92px" width="9" height="8"><polygon points="4.2,0.1 8.5,7.5 0,7.5" fill="#cca43a"/><rect x="3.6" y="2.3" width="1.2" height="3" fill="#f8e8ab"/><rect x="3.6" y="5.9" width="1.2" height="0.9" fill="#f8e8ab"/></svg>
<div class="t" style="left:196.50px;top:320.20px;font-size:7.2px;line-height:7.2px;color:#353535;">PJ1903-0009</div>
<svg style="left:276px;top:319.12px" width="7" height="8"><rect x="0" y="0" width="6.2" height="7.7" fill="#6a67aa"/><g fill="#a8a6da"><rect x="1.1" y="0.9" width="1.5" height="5.2"/><rect x="3.6" y="0.9" width="1.5" height="5.2"/></g><rect x="1.1" y="2.9" width="4" height="0.5" fill="#6a67aa"/></svg>
<div class="t" style="left:284.00px;top:320.20px;font-size:7.2px;line-height:7.2px;color:#3d4677;">Marc Simo...</div>
<div class="t" style="left:404.90px;top:320.20px;font-size:7.2px;line-height:7.2px;color:#353535;">26/10/2019</div>
<div class="t" style="left:289.70px;width:400px;text-align:center;top:320.20px;font-size:7.2px;line-height:7.2px;color:#353535;">31/10/2019</div>
<div class="t" style="left:527.30px;top:320.20px;font-size:7.2px;line-height:7.2px;color:#353535;">Contacts projet</div>
<div class="t" style="right:351.10px;top:320.20px;font-size:7.2px;line-height:7.2px;color:#417a7d;">3 600,00</div>
<div class="r" style="left:719.10px;top:319.32px;width:6.70px;height:5.90px;background:transparent;border:0.8px solid #dedede;border-radius:1px;box-sizing:border-box;"></div>
<div class="t" style="left:581.30px;width:400px;text-align:center;top:320.20px;font-size:7.2px;line-height:7.2px;color:#353535;">01/03/2019 12:28</div>
<div class="t" style="left:645.75px;width:400px;text-align:center;top:320.20px;font-size:7.2px;line-height:7.2px;color:#353535;">17/04/2020 14:37</div>
<div class="r" style="left:929.00px;top:318.32px;width:28.80px;height:11.00px;background:#2e9c78;border-radius:2px;"></div>
<div class="t" style="left:743.40px;width:400px;text-align:center;top:320.30px;font-size:7.2px;line-height:7.2px;color:#fff;font-weight:bold;">Ouvert</div>
<div class="r" style="left:975.50px;top:319.52px;width:6.50px;height:6.30px;background:#fff;border:0.8px solid #888;border-radius:1.2px;box-sizing:border-box;"></div>
<div class="r" style="left:121.50px;top:332.56px;width:875.00px;height:18.54px;background:#fff;"></div>
<div class="r" style="left:121.50px;top:350.65px;width:875.00px;height:1.00px;background:#e9e9e9;z-index:1;"></div>
<svg style="left:125px;top:338.16px" width="9" height="7"><g fill="#555585"><circle cx="1.6" cy="1.5" r="1.3"/><circle cx="7.1" cy="1.5" r="1.3"/><circle cx="4.4" cy="5.8" r="1.3"/></g><path d="M1.6 1.3 L7.1 1.4 M1.6 1.3 L4.4 5.6" stroke="#555585" stroke-width="0.55"/></svg>
<div class="t" style="left:135.60px;top:338.74px;font-size:7.2px;line-height:7.2px;color:#3d4677;">PJ1903-0010</div>
<svg style="left:179.6px;top:337.46px" width="9" height="8"><polygon points="4.2,0.1 8.5,7.5 0,7.5" fill="#cca43a"/><rect x="3.6" y="2.3" width="1.2" height="3" fill="#f8e8ab"/><rect x="3.6" y="5.9" width="1.2" height="0.9" fill="#f8e8ab"/></svg>
<div class="t" style="left:196.50px;top:338.74px;font-size:7.2px;line-height:7.2px;color:#353535;">Libellé du projet</div>
<svg style="left:276px;top:337.66px" width="7" height="8"><rect x="0" y="0" width="6.2" height="7.7" fill="#6a67aa"/><g fill="#a8a6da"><rect x="1.1" y="0.9" width="1.5" height="5.2"/><rect x="3.6" y="0.9" width="1.5" height="5.2"/></g><rect x="1.1" y="2.9" width="4" height="0.5" fill="#6a67aa"/></svg>
<div class="t" style="left:284.00px;top:338.74px;font-size:7.2px;line-height:7.2px;color:#3d4677;">Garderie C...</div>
<div class="t" style="left:404.90px;top:338.74px;font-size:7.2px;line-height:7.2px;color:#353535;">01/10/2019</div>
<div class="t" style="left:289.70px;width:400px;text-align:center;top:338.74px;font-size:7.2px;line-height:7.2px;color:#353535;">10/11/2019</div>
<div class="t" style="left:527.30px;top:338.74px;font-size:7.2px;line-height:7.2px;color:#353535;">Contacts projet</div>
<div class="t" style="right:351.10px;top:338.74px;font-size:7.2px;line-height:7.2px;color:#417a7d;">1 480,00</div>
<div class="t" style="right:306.80px;top:338.74px;font-size:7.2px;line-height:7.2px;color:#417a7d;">1 000,00</div>
<div class="r" style="left:719.10px;top:337.86px;width:6.70px;height:5.90px;background:transparent;border:0.8px solid #dedede;border-radius:1px;box-sizing:border-box;"></div>
<div class="t" style="left:581.30px;width:400px;text-align:center;top:338.74px;font-size:7.2px;line-height:7.2px;color:#353535;">01/08/2019 11:28</div>
<div class="t" style="left:645.75px;width:400px;text-align:center;top:338.74px;font-size:7.2px;line-height:7.2px;color:#353535;">08/02/2021 15:37</div>
<div class="r" style="left:929.00px;top:336.86px;width:28.80px;height:11.00px;background:#2e9c78;border-radius:2px;"></div>
<div class="t" style="left:743.40px;width:400px;text-align:center;top:338.84px;font-size:7.2px;line-height:7.2px;color:#fff;font-weight:bold;">Ouvert</div>
<div class="r" style="left:975.50px;top:338.06px;width:6.50px;height:6.30px;background:#fff;border:0.8px solid #888;border-radius:1.2px;box-sizing:border-box;"></div>
<div class="r" style="left:121.50px;top:351.10px;width:875.00px;height:18.54px;background:#f8f8f8;"></div>
<div class="r" style="left:121.50px;top:369.19px;width:875.00px;height:1.00px;background:#e9e9e9;z-index:1;"></div>
<svg style="left:125px;top:356.70px" width="9" height="7"><g fill="#555585"><circle cx="1.6" cy="1.5" r="1.3"/><circle cx="7.1" cy="1.5" r="1.3"/><circle cx="4.4" cy="5.8" r="1.3"/></g><path d="M1.6 1.3 L7.1 1.4 M1.6 1.3 L4.4 5.6" stroke="#555585" stroke-width="0.55"/></svg>
<div class="t" style="left:135.60px;top:357.28px;font-size:7.2px;line-height:7.2px;color:#3d4677;">PJ1903-0011</div>
<svg style="left:179.6px;top:356.00px" width="9" height="8"><polygon points="4.2,0.1 8.5,7.5 0,7.5" fill="#cca43a"/><rect x="3.6" y="2.3" width="1.2" height="3" fill="#f8e8ab"/><rect x="3.6" y="5.9" width="1.2" height="0.9" fill="#f8e8ab"/></svg>
<div class="t" style="left:196.50px;top:357.28px;font-size:7.2px;line-height:7.2px;color:#353535;">PJ1903-0011</div>
<svg style="left:276px;top:356.20px" width="7" height="8"><rect x="0" y="0" width="6.2" height="7.7" fill="#6a67aa"/><g fill="#a8a6da"><rect x="1.1" y="0.9" width="1.5" height="5.2"/><rect x="3.6" y="0.9" width="1.5" height="5.2"/></g><rect x="1.1" y="2.9" width="4" height="0.5" fill="#6a67aa"/></svg>
<div class="t" style="left:284.00px;top:357.28px;font-size:7.2px;line-height:7.2px;color:#3d4677;">Garderie C...</div>
<div class="t" style="left:404.90px;top:357.28px;font-size:7.2px;line-height:7.2px;color:#353535;">01/10/2019</div>
<div class="t" style="left:289.70px;width:400px;text-align:center;top:357.28px;font-size:7.2px;line-height:7.2px;color:#353535;">16/12/2019</div>
<div class="t" style="left:527.30px;top:357.28px;font-size:7.2px;line-height:7.2px;color:#353535;">Contacts projet</div>
<div class="t" style="right:351.10px;top:357.28px;font-size:7.2px;line-height:7.2px;color:#417a7d;">1 480,00</div>
<div class="r" style="left:719.10px;top:356.40px;width:6.70px;height:5.90px;background:transparent;border:0.8px solid #dedede;border-radius:1px;box-sizing:border-box;"></div>
<div class="t" style="left:581.30px;width:400px;text-align:center;top:357.28px;font-size:7.2px;line-height:7.2px;color:#353535;">01/08/2019 11:28</div>
<div class="t" style="left:645.75px;width:400px;text-align:center;top:357.28px;font-size:7.2px;line-height:7.2px;color:#353535;">08/02/2021 15:37</div>
<div class="r" style="left:929.00px;top:355.40px;width:28.80px;height:11.00px;background:#2e9c78;border-radius:2px;"></div>
<div class="t" style="left:743.40px;width:400px;text-align:center;top:357.38px;font-size:7.2px;line-height:7.2px;color:#fff;font-weight:bold;">Ouvert</div>
<div class="r" style="left:975.50px;top:356.60px;width:6.50px;height:6.30px;background:#fff;border:0.8px solid #888;border-radius:1.2px;box-sizing:border-box;"></div>
<div class="r" style="left:121.50px;top:369.64px;width:875.00px;height:18.54px;background:#fff;"></div>
<div class="r" style="left:121.50px;top:387.73px;width:875.00px;height:1.00px;background:#e9e9e9;z-index:1;"></div>
<svg style="left:125px;top:375.24px" width="9" height="7"><g fill="#555585"><circle cx="1.6" cy="1.5" r="1.3"/><circle cx="7.1" cy="1.5" r="1.3"/><circle cx="4.4" cy="5.8" r="1.3"/></g><path d="M1.6 1.3 L7.1 1.4 M1.6 1.3 L4.4 5.6" stroke="#555585" stroke-width="0.55"/></svg>
<div class="t" style="left:135.60px;top:375.82px;font-size:7.2px;line-height:7.2px;color:#3d4677;">PJ1903-0012</div>
<svg style="left:179.6px;top:374.54px" width="9" height="8"><polygon points="4.2,0.1 8.5,7.5 0,7.5" fill="#cca43a"/><rect x="3.6" y="2.3" width="1.2" height="3" fill="#f8e8ab"/><rect x="3.6" y="5.9" width="1.2" height="0.9" fill="#f8e8ab"/></svg>
<div class="t" style="left:196.50px;top:375.82px;font-size:7.2px;line-height:7.2px;color:#353535;">PJ1903-0012</div>
<svg style="left:276px;top:374.74px" width="7" height="8"><rect x="0" y="0" width="6.2" height="7.7" fill="#6a67aa"/><g fill="#a8a6da"><rect x="1.1" y="0.9" width="1.5" height="5.2"/><rect x="3.6" y="0.9" width="1.5" height="5.2"/></g><rect x="1.1" y="2.9" width="4" height="0.5" fill="#6a67aa"/></svg>
<div class="t" style="left:284.00px;top:375.82px;font-size:7.2px;line-height:7.2px;color:#3d4677;">Marc Simo...</div>
<div class="t" style="left:404.90px;top:375.82px;font-size:7.2px;line-height:7.2px;color:#353535;">01/03/2019</div>
<div class="t" style="left:289.70px;width:400px;text-align:center;top:375.82px;font-size:7.2px;line-height:7.2px;color:#353535;">25/01/2020</div>
<div class="t" style="left:527.30px;top:375.82px;font-size:7.2px;line-height:7.2px;color:#353535;">Contacts projet</div>
<div class="t" style="right:351.10px;top:375.82px;font-size:7.2px;line-height:7.2px;color:#417a7d;">0,00</div>
<div class="r" style="left:719.10px;top:374.94px;width:6.70px;height:5.90px;background:transparent;border:0.8px solid #dedede;border-radius:1px;box-sizing:border-box;"></div>
<div class="t" style="left:581.30px;width:400px;text-align:center;top:375.82px;font-size:7.2px;line-height:7.2px;color:#353535;">01/11/2019 12:29</div>
<div class="t" style="left:645.75px;width:400px;text-align:center;top:375.82px;font-size:7.2px;line-height:7.2px;color:#353535;">10/03/2020 19:41</div>
<div class="r" style="left:929.00px;top:373.94px;width:28.80px;height:11.00px;background:#2e9c78;border-radius:2px;"></div>
<div class="t" style="left:743.40px;width:400px;text-align:center;top:375.92px;font-size:7.2px;line-height:7.2px;color:#fff;font-weight:bold;">Ouvert</div>
<div class="r" style="left:975.50px;top:375.14px;width:6.50px;height:6.30px;background:#fff;border:0.8px solid #888;border-radius:1.2px;box-sizing:border-box;"></div>
<div class="r" style="left:121.50px;top:388.18px;width:875.00px;height:18.54px;background:#f8f8f8;"></div>
<div class="r" style="left:121.50px;top:406.27px;width:875.00px;height:1.00px;background:#e9e9e9;z-index:1;"></div>
<svg style="left:125px;top:393.78px" width="9" height="7"><g fill="#555585"><circle cx="1.6" cy="1.5" r="1.3"/><circle cx="7.1" cy="1.5" r="1.3"/><circle cx="4.4" cy="5.8" r="1.3"/></g><path d="M1.6 1.3 L7.1 1.4 M1.6 1.3 L4.4 5.6" stroke="#555585" stroke-width="0.55"/></svg>
<div class="t" style="left:135.60px;top:394.36px;font-size:7.2px;line-height:7.2px;color:#3d4677;">PJ1903-0013</div>
<svg style="left:179.6px;top:393.08px" width="9" height="8"><polygon points="4.2,0.1 8.5,7.5 0,7.5" fill="#cca43a"/><rect x="3.6" y="2.3" width="1.2" height="3" fill="#f8e8ab"/><rect x="3.6" y="5.9" width="1.2" height="0.9" fill="#f8e8ab"/></svg>
<div class="t" style="left:196.50px;top:394.36px;font-size:7.2px;line-height:7.2px;color:#353535;">PJ1903-0013</div>
<svg style="left:276px;top:393.28px" width="7" height="8"><rect x="0" y="0" width="6.2" height="7.7" fill="#6a67aa"/><g fill="#a8a6da"><rect x="1.1" y="0.9" width="1.5" height="5.2"/><rect x="3.6" y="0.9" width="1.5" height="5.2"/></g><rect x="1.1" y="2.9" width="4" height="0.5" fill="#6a67aa"/></svg>
<div class="t" style="left:284.00px;top:394.36px;font-size:7.2px;line-height:7.2px;color:#3d4677;">Garderie C...</div>
<div class="t" style="left:404.90px;top:394.36px;font-size:7.2px;line-height:7.2px;color:#353535;">01/03/2019</div>
<div class="t" style="left:289.70px;width:400px;text-align:center;top:394.36px;font-size:7.2px;line-height:7.2px;color:#353535;">16/08/2019</div>
<div class="t" style="left:527.30px;top:394.36px;font-size:7.2px;line-height:7.2px;color:#353535;">Contacts projet</div>
<div class="t" style="right:351.10px;top:394.36px;font-size:7.2px;line-height:7.2px;color:#417a7d;">0,00</div>
<div class="r" style="left:719.10px;top:393.48px;width:6.70px;height:5.90px;background:transparent;border:0.8px solid #dedede;border-radius:1px;box-sizing:border-box;"></div>
<div class="t" style="left:581.30px;width:400px;text-align:center;top:394.36px;font-size:7.2px;line-height:7.2px;color:#353535;">01/03/2019 12:28</div>
<div class="t" style="left:645.75px;width:400px;text-align:center;top:394.36px;font-size:7.2px;line-height:7.2px;color:#353535;">10/03/2020 19:41</div>
<div class="r" style="left:929.00px;top:392.48px;width:28.80px;height:11.00px;background:#2e9c78;border-radius:2px;"></div>
<div class="t" style="left:743.40px;width:400px;text-align:center;top:394.46px;font-size:7.2px;line-height:7.2px;color:#fff;font-weight:bold;">Ouvert</div>
<div class="r" style="left:975.50px;top:393.68px;width:6.50px;height:6.30px;background:#fff;border:0.8px solid #888;border-radius:1.2px;box-sizing:border-box;"></div>
<div class="r" style="left:121.50px;top:406.72px;width:875.00px;height:18.54px;background:#fff;"></div>
<div class="r" style="left:121.50px;top:424.81px;width:875.00px;height:1.00px;background:#e9e9e9;z-index:1;"></div>
<svg style="left:125px;top:412.32px" width="9" height="7"><g fill="#555585"><circle cx="1.6" cy="1.5" r="1.3"/><circle cx="7.1" cy="1.5" r="1.3"/><circle cx="4.4" cy="5.8" r="1.3"/></g><path d="M1.6 1.3 L7.1 1.4 M1.6 1.3 L4.4 5.6" stroke="#555585" stroke-width="0.55"/></svg>
<div class="t" style="left:135.60px;top:412.90px;font-size:7.2px;line-height:7.2px;color:#3d4677;">PJ1903-0014</div>
<svg style="left:179.6px;top:411.62px" width="9" height="8"><polygon points="4.2,0.1 8.5,7.5 0,7.5" fill="#cca43a"/><rect x="3.6" y="2.3" width="1.2" height="3" fill="#f8e8ab"/><rect x="3.6" y="5.9" width="1.2" height="0.9" fill="#f8e8ab"/></svg>
<div class="t" style="left:196.50px;top:412.90px;font-size:7.2px;line-height:7.2px;color:#353535;">PJ1903-0014</div>
<svg style="left:276px;top:411.82px" width="7" height="8"><rect x="0" y="0" width="6.2" height="7.7" fill="#6a67aa"/><g fill="#a8a6da"><rect x="1.1" y="0.9" width="1.5" height="5.2"/><rect x="3.6" y="0.9" width="1.5" height="5.2"/></g><rect x="1.1" y="2.9" width="4" height="0.5" fill="#6a67aa"/></svg>
<div class="t" style="left:284.00px;top:412.90px;font-size:7.2px;line-height:7.2px;color:#3d4677;">Garderie C...</div>
<div class="t" style="left:404.90px;top:412.90px;font-size:7.2px;line-height:7.2px;color:#353535;">01/03/2019</div>
<div class="t" style="left:289.70px;width:400px;text-align:center;top:412.90px;font-size:7.2px;line-height:7.2px;color:#353535;">16/08/2019</div>
<div class="t" style="left:527.30px;top:412.90px;font-size:7.2px;line-height:7.2px;color:#353535;">Contacts projet</div>
<div class="t" style="right:351.10px;top:412.90px;font-size:7.2px;line-height:7.2px;color:#417a7d;">0,00</div>
<div class="r" style="left:719.10px;top:412.02px;width:6.70px;height:5.90px;background:transparent;border:0.8px solid #dedede;border-radius:1px;box-sizing:border-box;"></div>
<div class="t" style="left:581.30px;width:400px;text-align:center;top:412.90px;font-size:7.2px;line-height:7.2px;color:#353535;">01/05/2018 11:28</div>
<div class="t" style="left:645.75px;width:400px;text-align:center;top:412.90px;font-size:7.2px;line-height:7.2px;color:#353535;">10/03/2020 19:41</div>
<div class="r" style="left:929.00px;top:411.02px;width:28.80px;height:11.00px;background:#2e9c78;border-radius:2px;"></div>
<div class="t" style="left:743.40px;width:400px;text-align:center;top:413.00px;font-size:7.2px;line-height:7.2px;color:#fff;font-weight:bold;">Ouvert</div>
<div class="r" style="left:975.50px;top:412.22px;width:6.50px;height:6.30px;background:#fff;border:0.8px solid #888;border-radius:1.2px;box-sizing:border-box;"></div>
<div class="r" style="left:121.50px;top:425.26px;width:875.00px;height:18.54px;background:#f8f8f8;"></div>
<div class="r" style="left:121.50px;top:443.35px;width:875.00px;height:1.00px;background:#e9e9e9;z-index:1;"></div>
<svg style="left:125px;top:430.86px" width="9" height="7"><g fill="#555585"><circle cx="1.6" cy="1.5" r="1.3"/><circle cx="7.1" cy="1.5" r="1.3"/><circle cx="4.4" cy="5.8" r="1.3"/></g><path d="M1.6 1.3 L7.1 1.4 M1.6 1.3 L4.4 5.6" stroke="#555585" stroke-width="0.55"/></svg>
<div class="t" style="left:135.60px;top:431.44px;font-size:7.2px;line-height:7.2px;color:#3d4677;">PJ1903-0015</div>
<svg style="left:179.6px;top:430.16px" width="9" height="8"><polygon points="4.2,0.1 8.5,7.5 0,7.5" fill="#cca43a"/><rect x="3.6" y="2.3" width="1.2" height="3" fill="#f8e8ab"/><rect x="3.6" y="5.9" width="1.2" height="0.9" fill="#f8e8ab"/></svg>
<div class="t" style="left:196.50px;top:431.44px;font-size:7.2px;line-height:7.2px;color:#353535;">PJ1903-0015</div>
<svg style="left:276px;top:430.36px" width="7" height="8"><rect x="0" y="0" width="6.2" height="7.7" fill="#6a67aa"/><g fill="#a8a6da"><rect x="1.1" y="0.9" width="1.5" height="5.2"/><rect x="3.6" y="0.9" width="1.5" height="5.2"/></g><rect x="1.1" y="2.9" width="4" height="0.5" fill="#6a67aa"/></svg>
<div class="t" style="left:284.00px;top:431.44px;font-size:7.2px;line-height:7.2px;color:#3d4677;">Garderie C...</div>
<div class="t" style="left:404.90px;top:431.44px;font-size:7.2px;line-height:7.2px;color:#353535;">01/03/2019</div>
<div class="t" style="left:289.70px;width:400px;text-align:center;top:431.44px;font-size:7.2px;line-height:7.2px;color:#353535;">16/08/2019</div>
<div class="t" style="left:527.30px;top:431.44px;font-size:7.2px;line-height:7.2px;color:#353535;">Contacts projet</div>
<div class="t" style="right:351.10px;top:431.44px;font-size:7.2px;line-height:7.2px;color:#417a7d;">0,00</div>
<div class="r" style="left:719.10px;top:430.56px;width:6.70px;height:5.90px;background:transparent;border:0.8px solid #dedede;border-radius:1px;box-sizing:border-box;"></div>
<div class="t" style="left:581.30px;width:400px;text-align:center;top:431.44px;font-size:7.2px;line-height:7.2px;color:#353535;">01/05/2018 11:28</div>
<div class="t" style="left:645.75px;width:400px;text-align:center;top:431.44px;font-size:7.2px;line-height:7.2px;color:#353535;">10/03/2020 19:41</div>
<div class="r" style="left:929.00px;top:429.56px;width:28.80px;height:11.00px;background:#2e9c78;border-radius:2px;"></div>
<div class="t" style="left:743.40px;width:400px;text-align:center;top:431.54px;font-size:7.2px;line-height:7.2px;color:#fff;font-weight:bold;">Ouvert</div>
<div class="r" style="left:975.50px;top:430.76px;width:6.50px;height:6.30px;background:#fff;border:0.8px solid #888;border-radius:1.2px;box-sizing:border-box;"></div>
<div class="r" style="left:121.50px;top:443.80px;width:875.00px;height:18.54px;background:#fff;"></div>
<div class="r" style="left:121.50px;top:461.89px;width:875.00px;height:1.00px;background:#e9e9e9;z-index:1;"></div>
<svg style="left:125px;top:449.40px" width="9" height="7"><g fill="#555585"><circle cx="1.6" cy="1.5" r="1.3"/><circle cx="7.1" cy="1.5" r="1.3"/><circle cx="4.4" cy="5.8" r="1.3"/></g><path d="M1.6 1.3 L7.1 1.4 M1.6 1.3 L4.4 5.6" stroke="#555585" stroke-width="0.55"/></svg>
<div class="t" style="left:135.60px;top:449.98px;font-size:7.2px;line-height:7.2px;color:#3d4677;">PJ1903-0016</div>
<svg style="left:179.6px;top:448.70px" width="9" height="8"><polygon points="4.2,0.1 8.5,7.5 0,7.5" fill="#cca43a"/><rect x="3.6" y="2.3" width="1.2" height="3" fill="#f8e8ab"/><rect x="3.6" y="5.9" width="1.2" height="0.9" fill="#f8e8ab"/></svg>
<div class="t" style="left:196.50px;top:449.98px;font-size:7.2px;line-height:7.2px;color:#353535;">Libellé changer</div>
<svg style="left:276px;top:448.90px" width="7" height="8"><rect x="0" y="0" width="6.2" height="7.7" fill="#6a67aa"/><g fill="#a8a6da"><rect x="1.1" y="0.9" width="1.5" height="5.2"/><rect x="3.6" y="0.9" width="1.5" height="5.2"/></g><rect x="1.1" y="2.9" width="4" height="0.5" fill="#6a67aa"/></svg>
<div class="t" style="left:284.00px;top:449.98px;font-size:7.2px;line-height:7.2px;color:#3d4677;">Autre Tiers</div>
<div class="t" style="left:404.90px;top:449.98px;font-size:7.2px;line-height:7.2px;color:#353535;">21/03/2019</div>
<div class="t" style="left:289.70px;width:400px;text-align:center;top:449.98px;font-size:7.2px;line-height:7.2px;color:#353535;">31/10/2019</div>
<div class="t" style="left:527.30px;top:449.98px;font-size:7.2px;line-height:7.2px;color:#353535;">Contacts projet</div>
<div class="r" style="left:719.10px;top:449.10px;width:6.70px;height:5.90px;background:transparent;border:0.8px solid #dedede;border-radius:1px;box-sizing:border-box;"></div>
<div class="t" style="left:581.30px;width:400px;text-align:center;top:449.98px;font-size:7.2px;line-height:7.2px;color:#353535;">21/03/2019 11:10</div>
<div class="t" style="left:645.75px;width:400px;text-align:center;top:449.98px;font-size:7.2px;line-height:7.2px;color:#353535;">09/02/2021 12:13</div>
<div class="r" style="left:929.00px;top:448.10px;width:28.80px;height:11.00px;background:#2e9c78;border-radius:2px;"></div>
<div class="t" style="left:743.40px;width:400px;text-align:center;top:450.08px;font-size:7.2px;line-height:7.2px;color:#fff;font-weight:bold;">Ouvert</div>
<div class="r" style="left:975.50px;top:449.30px;width:6.50px;height:6.30px;background:#fff;border:0.8px solid #888;border-radius:1.2px;box-sizing:border-box;"></div>
<div class="r" style="left:121.50px;top:462.34px;width:875.00px;height:18.54px;background:#f8f8f8;"></div>
<div class="r" style="left:121.50px;top:480.43px;width:875.00px;height:1.00px;background:#e9e9e9;z-index:1;"></div>
<svg style="left:125px;top:467.94px" width="9" height="7"><g fill="#555585"><circle cx="1.6" cy="1.5" r="1.3"/><circle cx="7.1" cy="1.5" r="1.3"/><circle cx="4.4" cy="5.8" r="1.3"/></g><path d="M1.6 1.3 L7.1 1.4 M1.6 1.3 L4.4 5.6" stroke="#555585" stroke-width="0.55"/></svg>
<div class="t" style="left:135.60px;top:468.52px;font-size:7.2px;line-height:7.2px;color:#3d4677;">PJ1911-0017</div>
<div class="t" style="left:196.50px;top:468.52px;font-size:7.2px;line-height:7.2px;color:#353535;">test 1 @akku</div>
<svg style="left:276px;top:467.44px" width="7" height="8"><rect x="0" y="0" width="6.2" height="7.7" fill="#6a67aa"/><g fill="#a8a6da"><rect x="1.1" y="0.9" width="1.5" height="5.2"/><rect x="3.6" y="0.9" width="1.5" height="5.2"/></g><rect x="1.1" y="2.9" width="4" height="0.5" fill="#6a67aa"/></svg>
<div class="t" style="left:284.00px;top:468.52px;font-size:7.2px;line-height:7.2px;color:#3d4677;">AXA Assur...</div>
<div class="t" style="left:404.90px;top:468.52px;font-size:7.2px;line-height:7.2px;color:#353535;">14/11/2019</div>
<div class="t" style="left:527.30px;top:468.52px;font-size:7.2px;line-height:7.2px;color:#353535;">Contacts projet</div>
<div class="t" style="right:306.80px;top:468.52px;font-size:7.2px;line-height:7.2px;color:#417a7d;">650 000,00</div>
<div class="r" style="left:719.10px;top:467.64px;width:6.70px;height:5.90px;background:transparent;border:0.8px solid #dedede;border-radius:1px;box-sizing:border-box;"></div>
<div class="t" style="left:581.30px;width:400px;text-align:center;top:468.52px;font-size:7.2px;line-height:7.2px;color:#353535;">14/11/2019 17:34</div>
<div class="t" style="left:645.75px;width:400px;text-align:center;top:468.52px;font-size:7.2px;line-height:7.2px;color:#353535;">10/03/2020 19:41</div>
<div class="r" style="left:921.30px;top:466.34px;width:36.10px;height:11.10px;background:#fff;border:0.8px solid #d4d4d4;border-radius:2px;box-sizing:border-box;"></div>
<div class="t" style="left:739.30px;width:400px;text-align:center;top:468.11px;font-size:7.8px;line-height:7.8px;color:#8c8c8c;">Brouillon</div>
<div class="r" style="left:975.50px;top:467.84px;width:6.50px;height:6.30px;background:#fff;border:0.8px solid #888;border-radius:1.2px;box-sizing:border-box;"></div>
<div class="r" style="left:121.50px;top:480.88px;width:875.00px;height:18.54px;background:#fff;"></div>
<div class="r" style="left:121.50px;top:498.97px;width:875.00px;height:1.00px;background:#e9e9e9;z-index:1;"></div>
<svg style="left:125px;top:486.48px" width="9" height="7"><g fill="#555585"><circle cx="1.6" cy="1.5" r="1.3"/><circle cx="7.1" cy="1.5" r="1.3"/><circle cx="4.4" cy="5.8" r="1.3"/></g><path d="M1.6 1.3 L7.1 1.4 M1.6 1.3 L4.4 5.6" stroke="#555585" stroke-width="0.55"/></svg>
<div class="t" style="left:135.60px;top:487.06px;font-size:7.2px;line-height:7.2px;color:#3d4677;">PJ1911-0018</div>
<div class="t" style="left:196.50px;top:487.06px;font-size:7.2px;line-height:7.2px;color:#353535;">test 2 @ akku</div>
<svg style="left:276px;top:485.98px" width="7" height="8"><rect x="0" y="0" width="6.2" height="7.7" fill="#6a67aa"/><g fill="#a8a6da"><rect x="1.1" y="0.9" width="1.5" height="5.2"/><rect x="3.6" y="0.9" width="1.5" height="5.2"/></g><rect x="1.1" y="2.9" width="4" height="0.5" fill="#6a67aa"/></svg>
<div class="t" style="left:284.00px;top:487.06px;font-size:7.2px;line-height:7.2px;color:#3d4677;">Garderie C...</div>
<div class="t" style="left:404.90px;top:487.06px;font-size:7.2px;line-height:7.2px;color:#353535;">14/11/2019</div>
<div class="t" style="left:527.30px;top:487.06px;font-size:7.2px;line-height:7.2px;color:#353535;">Contacts projet</div>
<div class="r" style="left:719.10px;top:486.18px;width:6.70px;height:5.90px;background:transparent;border:0.8px solid #dedede;border-radius:1px;box-sizing:border-box;"></div>
<div class="t" style="left:581.30px;width:400px;text-align:center;top:487.06px;font-size:7.2px;line-height:7.2px;color:#353535;">14/11/2019 17:34</div>
<div class="t" style="left:645.75px;width:400px;text-align:center;top:487.06px;font-size:7.2px;line-height:7.2px;color:#353535;">10/03/2020 19:41</div>
<div class="r" style="left:921.30px;top:484.88px;width:36.10px;height:11.10px;background:#fff;border:0.8px solid #d4d4d4;border-radius:2px;box-sizing:border-box;"></div>
<div class="t" style="left:739.30px;width:400px;text-align:center;top:486.65px;font-size:7.8px;line-height:7.8px;color:#8c8c8c;">Brouillon</div>
<div class="r" style="left:975.50px;top:486.38px;width:6.50px;height:6.30px;background:#fff;border:0.8px solid #888;border-radius:1.2px;box-sizing:border-box;"></div>
<div class="r" style="left:121.50px;top:499.42px;width:875.00px;height:18.54px;background:#f8f8f8;"></div>
<div class="r" style="left:121.50px;top:517.51px;width:875.00px;height:1.00px;background:#e9e9e9;z-index:1;"></div>
<svg style="left:125px;top:505.02px" width="9" height="7"><g fill="#555585"><circle cx="1.6" cy="1.5" r="1.3"/><circle cx="7.1" cy="1.5" r="1.3"/><circle cx="4.4" cy="5.8" r="1.3"/></g><path d="M1.6 1.3 L7.1 1.4 M1.6 1.3 L4.4 5.6" stroke="#555585" stroke-width="0.55"/></svg>
<div class="t" style="left:135.60px;top:505.60px;font-size:7.2px;line-height:7.2px;color:#3d4677;">PJ1911-0019</div>
<div class="t" style="left:196.50px;top:505.60px;font-size:7.2px;line-height:7.2px;color:#353535;">test 3@ akku</div>
<svg style="left:276px;top:504.52px" width="7" height="8"><rect x="0" y="0" width="6.2" height="7.7" fill="#6a67aa"/><g fill="#a8a6da"><rect x="1.1" y="0.9" width="1.5" height="5.2"/><rect x="3.6" y="0.9" width="1.5" height="5.2"/></g><rect x="1.1" y="2.9" width="4" height="0.5" fill="#6a67aa"/></svg>
<div class="t" style="left:284.00px;top:505.60px;font-size:7.2px;line-height:7.2px;color:#3d4677;">Garderie C...</div>
<div class="t" style="left:404.90px;top:505.60px;font-size:7.2px;line-height:7.2px;color:#353535;">14/11/2019</div>
<div class="t" style="left:527.30px;top:505.60px;font-size:7.2px;line-height:7.2px;color:#353535;">Contacts projet</div>
<div class="r" style="left:719.10px;top:504.72px;width:6.70px;height:5.90px;background:transparent;border:0.8px solid #dedede;border-radius:1px;box-sizing:border-box;"></div>
<div class="t" style="left:581.30px;width:400px;text-align:center;top:505.60px;font-size:7.2px;line-height:7.2px;color:#353535;">14/11/2019 17:35</div>
<div class="t" style="left:645.75px;width:400px;text-align:center;top:505.60px;font-size:7.2px;line-height:7.2px;color:#353535;">10/03/2020 19:41</div>
<div class="r" style="left:921.30px;top:503.42px;width:36.10px;height:11.10px;background:#fff;border:0.8px solid #d4d4d4;border-radius:2px;box-sizing:border-box;"></div>
<div class="t" style="left:739.30px;width:400px;text-align:center;top:505.19px;font-size:7.8px;line-height:7.8px;color:#8c8c8c;">Brouillon</div>
<div class="r" style="left:975.50px;top:504.92px;width:6.50px;height:6.30px;background:#fff;border:0.8px solid #888;border-radius:1.2px;box-sizing:border-box;"></div>
<div class="r" style="left:121.50px;top:517.96px;width:875.00px;height:18.54px;background:#fff;"></div>
<div class="r" style="left:121.50px;top:536.05px;width:875.00px;height:1.00px;background:#e9e9e9;z-index:1;"></div>
<svg style="left:125px;top:523.56px" width="9" height="7"><g fill="#555585"><circle cx="1.6" cy="1.5" r="1.3"/><circle cx="7.1" cy="1.5" r="1.3"/><circle cx="4.4" cy="5.8" r="1.3"/></g><path d="M1.6 1.3 L7.1 1.4 M1.6 1.3 L4.4 5.6" stroke="#555585" stroke-width="0.55"/></svg>
<div class="t" style="left:135.60px;top:524.14px;font-size:7.2px;line-height:7.2px;color:#3d4677;">PJ1911-0020</div>
<div class="t" style="left:196.50px;top:524.14px;font-size:7.2px;line-height:7.2px;color:#353535;">test 4 @a akku</div>
<svg style="left:276px;top:523.06px" width="7" height="8"><rect x="0" y="0" width="6.2" height="7.7" fill="#6a67aa"/><g fill="#a8a6da"><rect x="1.1" y="0.9" width="1.5" height="5.2"/><rect x="3.6" y="0.9" width="1.5" height="5.2"/></g><rect x="1.1" y="2.9" width="4" height="0.5" fill="#6a67aa"/></svg>
<div class="t" style="left:284.00px;top:524.14px;font-size:7.2px;line-height:7.2px;color:#3d4677;">Autre Tiers</div>
<div class="t" style="left:404.90px;top:524.14px;font-size:7.2px;line-height:7.2px;color:#353535;">14/11/2019</div>
<div class="t" style="left:527.30px;top:524.14px;font-size:7.2px;line-height:7.2px;color:#353535;">Contacts projet</div>
<div class="r" style="left:719.10px;top:523.26px;width:6.70px;height:5.90px;background:transparent;border:0.8px solid #dedede;border-radius:1px;box-sizing:border-box;"></div>
<div class="t" style="left:581.30px;width:400px;text-align:center;top:524.14px;font-size:7.2px;line-height:7.2px;color:#353535;">14/11/2019 17:35</div>
<div class="t" style="left:645.75px;width:400px;text-align:center;top:524.14px;font-size:7.2px;line-height:7.2px;color:#353535;">10/03/2020 19:41</div>
<div class="r" style="left:921.30px;top:521.96px;width:36.10px;height:11.10px;background:#fff;border:0.8px solid #d4d4d4;border-radius:2px;box-sizing:border-box;"></div>
<div class="t" style="left:739.30px;width:400px;text-align:center;top:523.73px;font-size:7.8px;line-height:7.8px;color:#8c8c8c;">Brouillon</div>
<div class="r" style="left:975.50px;top:523.46px;width:6.50px;height:6.30px;background:#fff;border:0.8px solid #888;border-radius:1.2px;box-sizing:border-box;"></div>
<div class="r" style="left:0.00px;top:634.70px;width:1000.00px;height:30.90px;background:#273b5b;"></div>
<div class="t" style="left:300.00px;width:400px;text-align:center;top:645.03px;font-size:12.9px;line-height:12.9px;color:#f4f6fa;">www.nextgestion.com</div>
</body></html>
